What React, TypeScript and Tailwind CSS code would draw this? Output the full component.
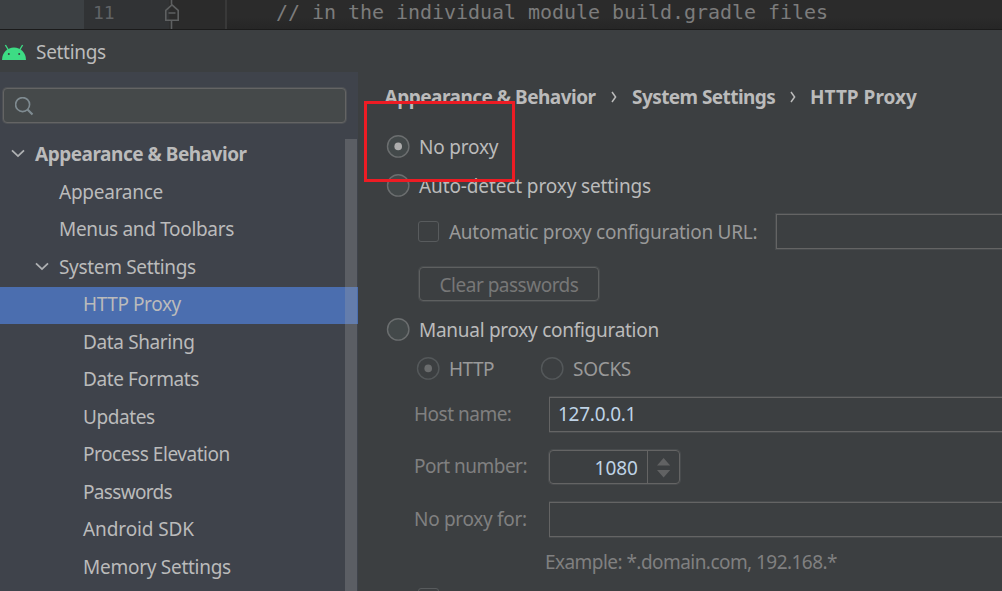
import type { ReactNode } from "react";

function Radio({ checked = false, disabled = false }: { checked?: boolean; disabled?: boolean }) {
  const stroke = disabled ? "#54585a" : "#6b6e6f";
  return (
    <svg className="size-6 shrink-0" viewBox="0 0 24 24">
      <circle cx="12.2" cy="11.4" r="10.7" fill={disabled ? "none" : "#43494a"} stroke={stroke} strokeWidth="1.4" />
      {checked && <circle cx="12.2" cy="11.4" r="3.8" fill={disabled ? "#6a6c6d" : "#adadad"} />}
    </svg>
  );
}

function Chevron() {
  return (
    <svg className="h-[10px] w-[14px] shrink-0" viewBox="0 0 14 10" fill="none" stroke="#afb1b3" strokeWidth="1.8">
      <path d="M1 1.3 L7 7.1 L13 1.3" />
    </svg>
  );
}

function Row({ children, className = "" }: { children: ReactNode; className?: string }) {
  return <div className={`flex h-[37.5px] shrink-0 items-center pb-[3px] whitespace-nowrap ${className}`}>{children}</div>;
}

function Crumb() {
  return (
    <svg className="mt-px h-3 w-[6px] shrink-0" viewBox="0 0 6 12" fill="none" stroke="#bbbbbb" strokeWidth="1.5">
      <path d="M1 1 L4.6 6 L1 11" />
    </svg>
  );
}

function Editor() {
  return (
    <div className="flex h-[30px] shrink-0 border-b border-[#1b1b1b] bg-linear-to-b from-[#2b2b2b] from-60% to-[#262626] font-['DejaVu_Sans_Mono',monospace] text-[#7c7c7c]">
      <div className="w-[84px] bg-[#3c4043]" />
      <div className="flex w-[143px] border-r-2 border-[#393939] bg-linear-to-r from-[#313335] from-60% to-[#2b2b2b] to-61%">
        <span className="w-[79px] pl-[9px] text-[18px] leading-[26px] text-[#606366]">11</span>
        <svg className="h-[29px] w-[18px]" viewBox="0 0 18 29" fill="none" stroke="#5e6061" strokeWidth="1.6">
          <path d="M8.5 0 V4.5 M8.5 21 V29 M2.8 20.3 V10.3 L9 4.8 L15.2 10.3 V20.3 Z M5.5 13 H12.5" />
        </svg>
      </div>
      <span className="pl-[49px] text-[20px] leading-[25px] tracking-[-0.04px] whitespace-pre">// in the individual module build.gradle files</span>
    </div>
  );
}

function Titlebar() {
  return (
    <div className="flex h-[42px] shrink-0 items-center pt-[2px] pl-[2px]">
      <svg className="h-4 w-6" viewBox="0 0 24 16">
        <path d="M0 16 A12 12.6 0 0 1 24 16 Z" fill="#3ddc84" />
        <path d="M3.4 1 L6.4 6 M20.6 1 L17.6 6" stroke="#3ddc84" strokeWidth="1.4" />
        <circle cx="6.8" cy="10" r="1" fill="#3c3f41" />
        <circle cx="17.2" cy="10" r="1" fill="#3c3f41" />
      </svg>
      <span className="pl-[10px] tracking-[-0.3px]">Settings</span>
    </div>
  );
}

const pages = [
  { label: "Data Sharing", tracking: "tracking-[-0.37px]" },
  { label: "Date Formats", tracking: "tracking-[-0.39px]" },
  { label: "Updates", tracking: "tracking-[-0.4px]" },
  { label: "Process Elevation", tracking: "tracking-[-0.45px]" },
  { label: "Passwords", tracking: "tracking-[-0.68px]" },
  { label: "Android SDK", tracking: "tracking-[-0.1px]" },
  { label: "Memory Settings", tracking: "tracking-[-0.27px]" },
];

function Sidebar() {
  return (
    <aside className="relative flex w-[358px] shrink-0 flex-col bg-[#3f434b] pt-4">
      <div className="ml-[3px] flex h-[35px] w-[343px] shrink-0 items-center rounded-[4px] border border-[#646464] bg-[#45494a] pl-[11px] shadow-[0_0_0_1px_#4e5155]">
        <svg className="mt-px size-[19px]" viewBox="0 0 19 19" fill="none" stroke="#7f8b91" strokeWidth="1.6">
          <circle cx="7.6" cy="7.6" r="7" />
          <path d="M12.5 12.5 L17.5 17.5" strokeWidth="2.2" />
        </svg>
      </div>
      <div className="mt-[14px] flex flex-col">
        <Row className="gap-[10px] pl-[11px] font-bold tracking-[-0.48px]">
          <Chevron />
          <span>Appearance &amp; Behavior</span>
        </Row>
        <Row className="pl-[59px] tracking-[-0.25px]">Appearance</Row>
        <Row className="pl-[59px] tracking-[-0.33px]">Menus and Toolbars</Row>
        <Row className="gap-[10px] pl-[35px] tracking-[-0.33px]">
          <Chevron />
          <span>System Settings</span>
        </Row>
        <div className="mb-[0.5px] flex h-[37px] shrink-0 items-center bg-[#4b6eaf] pb-[2.5px] pl-[83px] tracking-[-0.4px]">HTTP Proxy</div>
        {pages.map((p) => (
          <Row key={p.label} className={`pl-[83px] ${p.tracking}`}>
            {p.label}
          </Row>
        ))}
      </div>
      <div className="absolute top-[67px] right-[1px] bottom-0 w-3 bg-[#a6a6a6]/28" />
    </aside>
  );
}

function Content() {
  return (
    <main className="flex grow flex-col overflow-hidden">
      <div className="mb-1 flex h-[51px] shrink-0 items-center pb-[2px] pl-[26.5px] font-bold tracking-[-0.5px] whitespace-nowrap">
        <span className="w-[211px]">Appearance &amp; Behavior</span>
        <span className="flex w-[36.5px] justify-center">
          <Crumb />
        </span>
        <span className="w-[143px] tracking-[-0.57px]">System Settings</span>
        <span className="flex w-[35px] justify-center">
          <Crumb />
        </span>
        <span className="tracking-normal">HTTP Proxy</span>
      </div>
      <div className="flex h-[39px] shrink-0 items-center gap-[9px] pl-7 tracking-[-0.2px]">
        <Radio checked />
        <span>No proxy</span>
      </div>
      <div className="flex h-[39px] shrink-0 items-center gap-[9px] pl-7 tracking-[-0.12px]">
        <Radio />
        <span>Auto-detect proxy settings</span>
      </div>
      <div className="flex h-[53px] shrink-0 items-center pl-[60px] text-[#999999]">
        <span className="size-[21px] shrink-0 rounded-[3px] border-[1.5px] border-[#585b5d]" />
        <span className="w-[337px] shrink-0 pl-[10px] tracking-[-0.27px] whitespace-nowrap">Automatic proxy configuration URL:</span>
        <span className="h-[35px] grow border border-r-0 border-[#646464] shadow-[0_0_0_1px_#484b4d]" />
      </div>
      <div className="mt-[9px] mb-px ml-[61px] flex h-[34px] w-[180px] shrink-0 items-center justify-center rounded-[4px] border border-[#5e6060] pt-[2px] tracking-[-0.5px] text-[#777777] shadow-[0_0_0_1px_#484b4d]">
        <span>Clear passwords</span>
      </div>
      <div className="mt-2 flex h-[39px] shrink-0 items-center gap-[9px] pl-7 tracking-[-0.28px]">
        <Radio />
        <span>Manual proxy configuration</span>
      </div>
      <div className="flex h-[39px] shrink-0 items-center pl-[58px] text-[#999999]">
        <Radio checked disabled />
        <span className="w-[100px] pl-[9px] tracking-[-0.5px]">HTTP</span>
        <Radio disabled />
        <span className="pl-[9px] tracking-[-0.3px]">SOCKS</span>
      </div>
      <div className="mt-[9px] flex h-[35px] shrink-0 items-center pl-14 text-[#808080]">
        <span className="w-[135px] shrink-0 pb-[2px] tracking-[-0.5px]">Host name:</span>
        <span className="flex h-[35px] grow items-center border border-r-0 border-[#646464] pb-[2px] pl-2 tracking-[-0.25px] text-[#bfd3e6] shadow-[0_1px_0_#484b4d,0_-1px_0_#484b4d]">127.0.0.1</span>
      </div>
      <div className="mt-[18px] flex h-[34px] shrink-0 items-center pl-14 text-[#808080]">
        <span className="w-[135px] shrink-0 pb-[2px] tracking-[-0.52px]">Port number:</span>
        <span className="flex h-[34px] w-[131px] rounded-[4px] border border-[#646464] text-[#bfd3e6] shadow-[0_0_0_1px_#484b4d]">
          <span className="flex w-[98px] items-center justify-end border-r border-[#646464] pt-px pr-[9px]">1080</span>
          <svg className="h-[33px] w-[31px]" viewBox="0 0 31 33" fill="#616263">
            <path d="M9 14.5 L15.6 7 L22.2 14.5 Z M9 19 L15.6 26.5 L22.2 19 Z" />
          </svg>
        </span>
      </div>
      <div className="mt-[18px] flex h-[35px] shrink-0 items-center pl-14 text-[#808080]">
        <span className="w-[135px] shrink-0 pb-[2px] tracking-[-0.3px]">No proxy for:</span>
        <span className="h-[35px] grow border border-r-0 border-[#646464] shadow-[0_1px_0_#484b4d,0_-1px_0_#484b4d]" />
      </div>
      <div className="flex h-[51px] shrink-0 items-center pb-px pl-[187px] tracking-[-0.55px] text-[#808080]">Example: *.domain.com, 192.168.*</div>
      <span className="ml-[60px] size-[21px] shrink-0 rounded-[3px] border-[1.5px] border-[#585b5d]" />
    </main>
  );
}

export default function App() {
  return (
    <div className="relative flex h-[591px] w-[1002px] flex-col overflow-hidden bg-[#3c3f41] font-['Noto_Sans',sans-serif] text-[19px] leading-6 text-[#bbbbbb]">
      <Editor />
      <Titlebar />
      <div className="flex min-h-0 grow">
        <Sidebar />
        <Content />
      </div>
      <div className="absolute top-[101px] left-[364px] h-[81px] w-[151px] border-[3px] border-[#ed1c24]" />
    </div>
  );
}
